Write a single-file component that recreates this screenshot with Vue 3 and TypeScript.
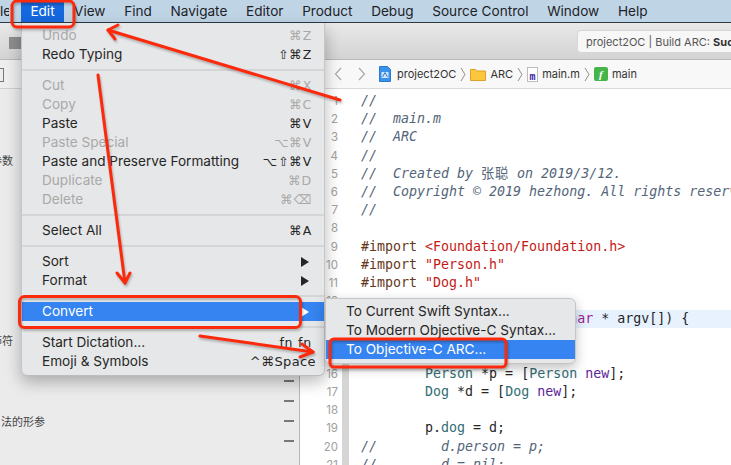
<script setup lang="ts">
const menus = ['View', 'Find', 'Navigate', 'Editor', 'Product', 'Debug', 'Source Control', 'Window', 'Help']

type Seg = { t: string; c?: string }
type Line = { n: number; segs: Seg[] }
const lines: Line[] = [
  { n: 1, segs: [{ t: '//', c: 'cm' }] },
  { n: 2, segs: [{ t: '//  main.m', c: 'cm' }] },
  { n: 3, segs: [{ t: '//  ARC', c: 'cm' }] },
  { n: 4, segs: [{ t: '//', c: 'cm' }] },
  { n: 5, segs: [{ t: '//  Created by ', c: 'cm' }, { t: '张聪', c: 'cm zh' }, { t: ' on 2019/3/12.', c: 'cm' }] },
  { n: 6, segs: [{ t: '//  Copyright © 2019 hezhong. All rights reserved.', c: 'cm' }] },
  { n: 7, segs: [{ t: '//', c: 'cm' }] },
  { n: 8, segs: [] },
  { n: 9, segs: [{ t: '#import ', c: 'pp' }, { t: '<Foundation/Foundation.h>', c: 'str' }] },
  { n: 10, segs: [{ t: '#import ', c: 'pp' }, { t: '"Person.h"', c: 'str' }] },
  { n: 11, segs: [{ t: '#import ', c: 'pp' }, { t: '"Dog.h"', c: 'str' }] },
  { n: 12, segs: [] },
  { n: 13, segs: [{ t: 'int', c: 'kw' }, { t: ' main(' }, { t: 'int', c: 'kw' }, { t: ' argc, ' }, { t: 'const', c: 'kw' }, { t: ' ' }, { t: 'char', c: 'kw' }, { t: ' * argv[]) {' }] },
  { n: 14, segs: [] },
  { n: 15, segs: [] },
  { n: 16, segs: [{ t: '        ' }, { t: 'Person', c: 'ty' }, { t: ' *p = [' }, { t: 'Person', c: 'ty' }, { t: ' ' }, { t: 'new', c: 'me' }, { t: '];' }] },
  { n: 17, segs: [{ t: '        ' }, { t: 'Dog', c: 'ty' }, { t: ' *d = [' }, { t: 'Dog', c: 'ty' }, { t: ' ' }, { t: 'new', c: 'me' }, { t: '];' }] },
  { n: 18, segs: [] },
  { n: 19, segs: [{ t: '        p.' }, { t: 'dog', c: 'ty' }, { t: ' = d;' }] },
  { n: 20, segs: [{ t: '//        d.person = p;', c: 'cm' }] },
  { n: 21, segs: [{ t: '//        d = nil;', c: 'cm' }] },
]

type Item = { l?: string; k?: string; dis?: boolean; sub?: boolean; sel?: boolean; sep?: boolean; wide?: boolean }
const items: Item[] = [
  { l: 'Undo', k: '⌘Z', dis: true },
  { l: 'Redo Typing', k: '⇧⌘Z' },
  { sep: true },
  { l: 'Cut', k: '⌘X', dis: true },
  { l: 'Copy', k: '⌘C', dis: true },
  { l: 'Paste', k: '⌘V' },
  { l: 'Paste Special', k: '⌥⌘V', dis: true },
  { l: 'Paste and Preserve Formatting', k: '⌥⇧⌘V' },
  { l: 'Duplicate', k: '⌘D', dis: true },
  { l: 'Delete', k: '⌘⌫', dis: true },
  { sep: true },
  { l: 'Select All', k: '⌘A' },
  { sep: true },
  { l: 'Sort', sub: true },
  { l: 'Format', sub: true },
  { sep: true },
  { l: 'Convert', sub: true, sel: true },
  { sep: true },
  { l: 'Start Dictation...', k: 'fn fn' },
  { l: 'Emoji & Symbols', k: '^⌘Space', wide: true },
]
const subItems = ['To Current Swift Syntax...', 'To Modern Objective-C Syntax...', 'To Objective-C ARC...']
const minusRows = [0, 1, 2, 3]
</script>

<template>
  <div class="screen">
    <header class="menubar">
      <span class="frag">le</span>
      <span class="edit">Edit</span>
      <span v-for="m in menus" :key="m" class="mi">{{ m }}</span>
    </header>

    <div class="toolbar">
      <span class="tb-square"></span>
      <span class="status">project2OC | Build ARC: <b>Succeeded</b></span>
    </div>

    <div class="main">
      <aside class="inspector">
        <div class="tabstrip"><span class="tab-box"></span></div>
        <span class="cn cn1">参数</span>
        <span class="cn cn2">饰符</span>
        <span class="cn cn3">法的形参</span>
        <div class="minus-col">
          <i v-for="r in minusRows" :key="r"></i>
        </div>
      </aside>

      <section class="editor">
        <nav class="crumbs">
          <svg class="chev-nav" width="9" height="14" viewBox="0 0 9 14"><path d="M7 1 1.5 7 7 13" fill="none" stroke="#a9a9a9" stroke-width="1.2"/></svg>
          <svg class="chev-nav second" width="9" height="14" viewBox="0 0 9 14"><path d="M2 1 7.5 7 2 13" fill="none" stroke="#a9a9a9" stroke-width="1.2"/></svg>
          <svg class="ic-proj" width="12" height="16" viewBox="0 0 12 16"><path d="M.5.5h8l3 3v12H.5z" fill="#3a93ea" stroke="#2a7bd0"/><rect x="2.500" y="6" width="7" height="6" fill="#cfe6fb"/><path d="M3.500 11 6 6.500 8.500 11" fill="none" stroke="#2a7bd0"/></svg>
          <span class="c">project2OC</span>
          <svg class="sep" width="6" height="15" viewBox="0 0 6 15"><path d="M1 1 5 7.500 1 14" fill="none" stroke="#8d8d8d"/></svg>
          <svg width="16" height="14" viewBox="0 0 16 14"><path d="M.5 2.500h5l1.500 1.500h8.500v9.500H.5z" fill="#fcc63e" stroke="#d9a32a"/></svg>
          <span class="c">ARC</span>
          <svg class="sep" width="6" height="15" viewBox="0 0 6 15"><path d="M1 1 5 7.500 1 14" fill="none" stroke="#8d8d8d"/></svg>
          <span class="ic-m">m</span>
          <span class="c">main.m</span>
          <svg class="sep" width="6" height="15" viewBox="0 0 6 15"><path d="M1 1 5 7.500 1 14" fill="none" stroke="#8d8d8d"/></svg>
          <span class="ic-f">f</span>
          <span class="c">main</span>
        </nav>
        <div class="code">
          <div v-for="line in lines" :key="line.n" class="row" :class="{ cur: line.n === 13 }">
            <span class="num">{{ line.n }}</span>
            <span class="ribbon"></span>
            <span class="src"><span v-for="(s, i) in line.segs" :key="i" :class="s.c">{{ s.t }}</span></span>
          </div>
        </div>
      </section>
    </div>

    <div class="menu">
      <template v-for="(it, i) in items" :key="i">
        <div v-if="it.sep" class="msep"></div>
        <div v-else class="mrow" :class="{ dis: it.dis, sel: it.sel }">
          <span>{{ it.l }}</span>
          <span v-if="it.k" class="key" :class="{ wide: it.wide }">{{ it.k }}</span>
          <span v-if="it.sub" class="tri"></span>
        </div>
      </template>
    </div>

    <div class="submenu">
      <div v-for="(s, i) in subItems" :key="s" class="srow" :class="{ sel: i === 2 }">{{ s }}</div>
    </div>

    <svg class="marks" width="731" height="465" viewBox="0 0 731 465">
      <g fill="none" stroke="#fb2a0c" stroke-linejoin="round" stroke-linecap="round" stroke-width="3">
        <rect x="12" y="1" width="62" height="26" rx="5"/>
        <rect x="19.500" y="296.500" width="281" height="31" rx="5"/>
        <rect x="330" y="339" width="176" height="28" rx="4"/>
        <path d="M340 100 108 30"/>
        <path d="M118 25 108 30 115 39"/>
        <path d="M98 75 125 283"/>
        <path d="M117 273 125 283 130 273"/>
        <path d="M200 336 313 352"/>
        <path d="M302 344 313 352 300 357"/>
      </g>
    </svg>
  </div>
</template>

<style>
html, body { margin: 0; background: #fff; overflow: hidden; }
</style>

<style scoped>
.screen {
  position: relative;
  width: 731px;
  height: 465px;
  overflow: hidden;
  font-family: "Inter", "Liberation Sans", "Noto Sans CJK SC", sans-serif;
  color: #262626;
  background: #fff;
}
.menubar {
  height: 22px;
  display: flex;
  align-items: center;
  background: #bfd5e6;
  border-bottom: 1px solid #2e3a44;
  font-size: 13.6px;
  color: #1e2226;
  box-sizing: content-box;
}
.frag { width: 9px; margin-right: 12px; text-align: right; overflow: hidden; flex: none; }
.edit {
  width: 43px;
  height: 22px;
  line-height: 22px;
  text-align: center;
  background: #1668de;
  color: #fff;
  margin-right: 10px;
  flex: none;
}
.mi { margin-right: 18.7px; white-space: nowrap; }
.toolbar {
  height: 37px;
  box-sizing: border-box;
  position: relative;
  display: flex;
  align-items: center;
  justify-content: flex-end;
  background: linear-gradient(#e9e9e9, #d3d3d3);
  border-bottom: 1px solid #b9b9b9;
}
.tb-square { position: absolute; left: 9px; top: 14px; width: 12px; height: 12px; background: #8e8e8e; }
.status {
  width: 154px;
  height: 23px;
  box-sizing: border-box;
  padding-left: 8px;
  line-height: 22px;
  background: #f7f7f7;
  border: 1px solid #d6d6d6;
  border-right: 0;
  border-radius: 4px 0 0 4px;
  font-size: 11px;
  color: #555;
  white-space: nowrap;
  overflow: hidden;
}
.status b { color: #333; }
.main { display: flex; height: 405px; }
.inspector {
  width: 300px;
  flex: none;
  background: #ebebeb;
  border-right: 1px solid #b5b5b5;
  position: relative;
  box-sizing: border-box;
}
.tabstrip {
  height: 29px;
  box-sizing: border-box;
  background: #eeeeee;
  border-bottom: 1px solid #cfcfcf;
  padding-top: 8px;
}
.tab-box { display: block; width: 3px; height: 12px; border: 1px solid #777; border-left: 0; }
.cn { position: absolute; font-size: 11px; color: #444; white-space: nowrap; }
.cn1 { left: -9px; top: 92px; }
.cn2 { left: -9px; top: 272px; }
.cn3 { left: 1px; top: 353px; }
.minus-col {
  position: absolute;
  left: 284px;
  top: 320px;
  display: flex;
  flex-direction: column;
  gap: 18px;
}
.minus-col i { display: block; width: 10px; height: 2px; background: #777; }
.editor { flex: 1; min-width: 0; background: #fff; }
.crumbs {
  height: 29px;
  box-sizing: border-box;
  display: flex;
  align-items: center;
  gap: 4px;
  padding-left: 34px;
  background: #f8f8f8;
  border-bottom: 1px solid #d9d9d9;
  font-size: 11px;
  color: #333;
}
.chev-nav { margin-right: 10px; }
.chev-nav.second { margin-right: 9px; }
.c { white-space: nowrap; }
.ic-proj { margin-right: 2px; }
.ic-m {
  width: 11px;
  height: 15px;
  box-sizing: border-box;
  background: #fff;
  border: 1px solid #bcbcbc;
  color: #3f2a9e;
  font-weight: 700;
  font-size: 10px;
  line-height: 17px;
  text-align: center;
  font-family: "DejaVu Sans Mono", monospace;
  overflow: hidden;
}
.ic-f {
  width: 14px;
  height: 14px;
  background: #45b54a;
  border-radius: 2px;
  color: #fff;
  font-size: 11px;
  font-style: italic;
  font-weight: 700;
  line-height: 14px;
  text-align: center;
  font-family: "Liberation Serif", serif;
}
.code {
  font-family: "DejaVu Sans Mono", "Noto Sans CJK SC", monospace;
  font-size: 13.3px;
  line-height: 18.2px;
  color: #262626;
  padding-top: 3px;
}
.row { display: flex; height: 18.2px; white-space: pre; }
.row.cur { background: #e8f2ff; }
.num {
  width: 38px;
  margin-right: 4px;
  flex: none;
  text-align: right;
  color: #a0a0a0;
  font-family: "Inter", sans-serif;
  font-size: 11.5px;
  background: #fff;
}
.ribbon { width: 7px; flex: none; background: #fff; }
.row:nth-child(n+14) .ribbon { background: #d5d5d5; }
.src { padding-left: 12px; }
.cm { color: #536579; font-style: italic; }
.zh { letter-spacing: .7px; font-style: normal; }
.pp { color: #643820; }
.str { color: #c41a16; }
.kw { color: #9b2393; }
.ty { color: #326d74; }
.me { color: #5c2699; }
.menu {
  position: absolute;
  left: 21px;
  top: 23px;
  width: 304px;
  box-sizing: border-box;
  padding: 3px 0 4px;
  background: #e6e7e8;
  border-left: 1px solid #c6c6c6;
  border-right: 1px solid #c6c6c6;
  border-bottom: 1px solid #bdbdbd;
  border-radius: 0 0 6px 6px;
  box-shadow: 0 6px 16px rgba(0, 0, 0, .28);
  font-size: 13.6px;
  color: #262626;
}
.mrow {
  height: 19px;
  line-height: 19px;
  padding: 0 12px 0 20px;
  display: flex;
  justify-content: space-between;
  align-items: center;
  white-space: nowrap;
}
.mrow.dis { color: #a9a9a9; }
.mrow.sel { background: #3584f1; color: #fff; }
.key { font-family: "DejaVu Sans", "Inter", sans-serif; letter-spacing: .8px; font-size: 12.5px; }
.key.wide { margin-right: -4px; letter-spacing: .4px; font-size: 13px; }
.msep { height: 2px; margin: 5px 0; background: #d4d5d6; }
.tri {
  width: 0;
  height: 0;
  border-left: 8px solid #262626;
  border-top: 5px solid transparent;
  border-bottom: 5px solid transparent;
  margin-right: 3px;
}
.sel .tri { border-left-color: #fff; }
.submenu {
  position: absolute;
  left: 325px;
  top: 298px;
  width: 251px;
  box-sizing: border-box;
  padding: 3px 0 4px;
  background: #e6e7e8;
  border: 1px solid #c6c6c6;
  border-radius: 0 6px 6px 6px;
  box-shadow: 0 4px 12px rgba(0, 0, 0, .25);
  font-size: 13.6px;
  color: #262626;
}
.srow { height: 19px; line-height: 19px; padding-left: 20px; white-space: nowrap; }
.srow.sel { background: #3584f1; color: #fff; }
.marks { position: absolute; left: 0; top: 0; pointer-events: none; filter: drop-shadow(1px 2px 1px rgba(0, 0, 0, .25)); }
</style>
